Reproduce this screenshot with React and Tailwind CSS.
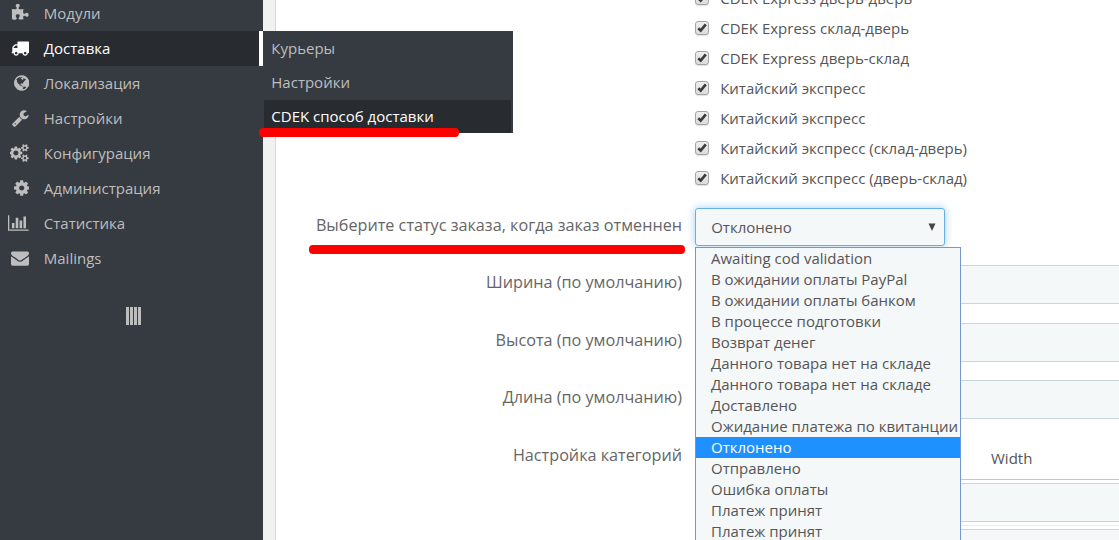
const ICONS = {
  puzzle: {
    box: "0 0 1792 1792",
    width: 18,
    d: "M1755 1083q0 81-44.500 135t-123.500 54q-41 0-77.500-17.500t-59-38-56.500-38-71-17.500q-110 0-110 124 0 39 16 115t15 115v5q-22 0-33 1-34 3-97.500 11.500t-115.500 13.500-98 5q-61 0-103-26.500t-42-83.500q0-37 17.500-71t38-56.500 38-59 17.500-77.500q0-79-54-123.500t-135-44.500q-84 0-143 45.500t-59 127.500q0 43 15 83t33.500 64.500 33.500 53 15 50.500q0 45-46 89-37 35-117 35-95 0-245-24-9-2-27.500-4t-27.500-4l-13-2q-1 0-3-1-2 0-2-1v-1024q2 1 17.500 3.500t34 5 21.500 3.500q150 24 245 24 80 0 117-35 46-44 46-89 0-22-15-50.500t-33.500-53-33.500-64.500-15-83q0-82 59-127.500t144-45.500q80 0 134 44.500t54 123.500q0 41-17.500 77.500t-38 59-38 56.500-17.500 71q0 57 42 83.500t103 26.500q64 0 180-15t163-17v2q-1 2-3.500 17.500t-5 34-3.500 21.500q-24 150-24 245 0 80 35 117 44 46 89 46 22 0 50.500-15t53-33.500 64.500-33.500 83-15q82 0 127.500 59t45.500 143z",
  },
  truck: {
    box: "64 0 1792 1792",
    width: 18,
    d: "M704 1408q0-52-38-90t-90-38-90 38-38 90 38 90 90 38 90-38 38-90zm-384-512h384v-256h-158q-13 0-22 9l-195 195q-9 9-9 22v30zm1280 512q0-52-38-90t-90-38-90 38-38 90 38 90 90 38 90-38 38-90zm256-1088v1024q0 15-4 26.500t-13.500 18.500-16.500 11.500-23.500 6-22.500 2-25.500 0-22.500-.5q0 106-75 181t-181 75-181-75-75-181h-384q0 106-75 181t-181 75-181-75-75-181h-64q-3 0-22.500.5t-25.500 0-22.500-2-23.500-6-16.500-11.500-13.500-18.500-4-26.500q0-26 19-45t45-19v-320q0-8-.5-35t0-38 2.500-34.500 6.500-37 14-30.500 22.500-30l198-198q19-19 50.500-32t58.500-13h160v-192q0-26 19-45t45-19h1024q26 0 45 19t19 45z",
  },
  globe: {
    box: "128 0 1536 1792",
    width: 15.4,
    d: "M896 128q209 0 385.500 103t279.500 279.500 103 385.500-103 385.500-279.500 279.500-385.500 103-385.500-103-279.500-279.500-103-385.500 103-385.500 279.500-279.500 385.500-103zm274 521q-2 1-9.500 9.500t-13.500 9.500q2 0 4.500-5t5-11 3.500-7q6-7 22-15 14-6 52-12 34-8 51 11-2-2 9.500-13t14.500-12q3-2 15-4.500t15-7.500l2-22q-12 1-17.500-7t-6.500-21q0 2-6 8 0-7-4.500-8t-11.500 1-9 1q-10-3-15-7.500t-8-16.500-4-15q-2-5-9.500-10.500t-9.500-10.500q-1-2-2.500-5.500t-3-6.500-4-5.500-5.500-2.500-7 5-7.500 10-4.500 5q-3-2-6-1.500t-4.500 1-4.500 3-5 3.500q-3 2-8.500 3t-8.500 2q15-5-1-11-10-4-16-3 9-4 7.500-12t-8.500-14h5q-1-4-8.500-8.500t-17.500-8.500-13-6q-8-5-34-9.500t-33-.5q-5 6-4.500 10.500t4 14 3.500 12.500q1 6-5.500 13t-6.500 12q0 7 14 15.500t10 21.500q-3 8-16 16t-16 12q-5 8-1.500 18.500t10.500 16.500q2 2 1.500 4t-3.500 4.500-5.500 4-6.500 3.500l-3 2q-11 5-20.500-6t-13.500-26q-7-25-16-30-23-8-29 1-5-13-41-26-25-9-58-4 6-1 0-15-7-15-19-12 3-6 4-17.500t1-13.500q3-13 12-23 1-1 7-8.500t9.500-13.500.5-6q35 4 50-11 5-5 11.500-17t10.500-17q9-6 14-5.500t14.500 5.500 14.500 5q14 1 15.500-11t-7.500-20q12 1 3-17-4-7-8-9-12-4-27 5-8 4 2 8-1-1-9.500 10.500t-16.500 17.500-16-5q-1-1-5.500-13.500t-9.500-13.500q-8 0-16 15 3-8-11-15t-24-8q19-12-8-27-7-4-20.500-5t-19.500 4q-5 7-5.500 11.500t5 8 10.500 5.500 11.500 4 8.500 3q14 10 8 14-2 1-8.500 3.500t-11.500 4.500-6 4q-3 4 0 14t-2 14q-5-5-9-17.500t-7-16.500q7 9-25 6l-10-1q-4 0-16 2t-20.500 1-13.500-8q-4-8 0-20 1-4 4-2-4-3-11-9.500t-10-8.500q-46 15-94 41 6 1 12-1 5-2 13-6.500t10-5.500q34-14 42-7l5-5q14 16 20 25-7-4-30-1-20 6-22 12 7 12 5 18-4-3-11.500-10t-14.500-11-15-5q-16 0-22 1-146 80-235 222 7 7 12 8 4 1 5 9t2.500 11 11.500-3q9 8 3 19 1-1 44 27 19 17 21 21 3 11-10 18-1-2-9-9t-9-4q-3 5 .5 18.500t10.500 12.500q-7 0-9.500 16t-2.500 35.500-1 23.500l2 1q-3 12 5.500 34.500t21.500 19.500q-13 3 20 43 6 8 8 9 3 2 12 7.500t15 10 10 10.500q4 5 10 22.500t14 23.500q-2 6 9.500 20t10.500 23q-1 0-2.500 1t-2.500 1q3 7 15.500 14t15.500 13q1 3 2 10t3 11 8 2q2-20-24-62-15-25-17-29-3-5-5.500-15.500t-4.500-14.500q2 0 6 1.500t8.500 3.500 7.500 4 2 3q-3 7 2 17.500t12 18.500 17 19 12 13q6 6 14 19.500t0 13.500q9 0 20 10.500t17 19.500q5 8 8 26t5 24q2 7 8.500 13.500t12.500 9.500l16 8 13 7q5 2 18.500 10.500t21.500 11.500q10 4 16 4t14.500-2.500 13.500-3.500q15-2 29 15t21 21q36 19 55 11-2 1 .5 7.500t8 15.500 9 14.500 5.500 8.500q5 6 18 15t18 15q6-4 7-9-3 8 7 20t18 10q14-3 14-32-31 15-49-18 0-1-2.500-5.500t-4-8.500-2.500-8.500 0-7.500 5-3q9 0 10-3.500t-2-12.500-4-13q-1-8-11-20t-12-15q-5 9-16 8t-16-9q0 1-1.500 5.500t-1.500 6.500q-13 0-15-1 1-3 2.500-17.500t3.500-22.500q1-4 5.500-12t7.500-14.500 4-12.500-4.500-9.500-17.500-2.500q-19 1-26 20-1 3-3 10.500t-5 11.500-9 7q-7 3-24 2t-24-5q-13-8-22.500-29t-9.500-37q0-10 2.500-26.500t3-25-5.500-24.500q3-2 9-9.500t10-10.500q2-1 4.500-1.500t4.500 0 4-1.500 3-6q-1-1-4-3-3-3-4-3 7 3 28.500-1.500t27.500 1.500q15 11 22-2 0-1-2.500-9.500t-.5-13.500q5 27 29 9 3 3 15.500 5t17.500 5q3 2 7 5.500t5.500 4.500 5-.5 8.500-6.500q10 14 12 24 11 40 19 44 7 3 11 2t4.500-9.500 0-14-1.500-12.500l-1-8v-18l-1-8q-15-3-18.500-12t1.500-18.500 15-18.500q1-1 8-3.500t15.500-6.500 12.500-8q21-19 15-35 7 0 11-9-1 0-5-3t-7.500-5-4.500-2q9-5 2-16 5-3 7.500-11t7.500-10q9 12 21 2 8-8 1-16 5-7 20.500-10.500t18.500-9.500q7 2 8-2t1-12 3-12q4-5 15-9t13-5l17-11q3-4 0-4 18 2 31-11 10-11-6-20 3-6-3-9.500t-15-5.500q3-1 11.500-.5t10.500-1.500q15-10-7-16-17-5-43 12zm-163 877q206-36 351-189-3-3-12.500-4.500t-12.500-3.500q-18-7-24-8 1-7-2.500-13t-8-9-12.500-8-11-7q-2-2-7-6t-7-5.500-7.500-4.500-8.500-2-10 1l-3 1q-3 1-5.500 2.500t-5.500 3-4 3 0 2.500q-21-17-36-22-5-1-11-5.500t-10.500-7-10-1.500-11.500 7q-5 5-6 15t-2 13q-7-5 0-17.500t2-18.500q-3-6-10.500-4.500t-12 4.500-11.500 8.500-9 6.500-8.500 5.500-8.500 7.500q-3 4-6 12t-5 11q-2-4-11.500-6.500t-9.500-5.500q2 10 4 35t5 38q7 31-12 48-27 25-29 40-4 22 12 26 0 7-8 20.500t-7 21.500q0 6 2 16z",
  },
  wrench: {
    box: "64 0 1664 1792",
    width: 16.7,
    d: "M448 1472q0-26-19-45t-45-19-45 19-19 45 19 45 45 19 45-19 19-45zm644-420l-682 682q-37 37-90 37-52 0-91-37l-106-108q-38-36-38-90 0-53 38-91l681-681q39 98 114.500 173.500t173.500 114.500zm634-435q0 39-23 106-47 134-164.500 217.500t-258.500 83.500q-185 0-316.500-131.500t-131.500-316.500 131.500-316.500 316.500-131.500q58 0 121.500 16.500t107.500 46.500q16 11 16 28t-16 28l-293 169v224l193 107q5-3 79-48.500t135.500-81 70.500-35.500q15 0 23.500 10t8.500 25z",
  },
  cogs: {
    box: "0 0 1920 1792",
    width: 19.5,
    d: "M832 896q0-106-75-181t-181-75-181 75-75 181 75 181 181 75 181-75 75-181zm768 512q0-52-38-90t-90-38-90 38-38 90q0 53 37.500 90.500t90.500 37.500 90.500-37.500 37.500-90.500zm0-1024q0-52-38-90t-90-38-90 38-38 90q0 53 37.500 90.500t90.500 37.500 90.500-37.500 37.500-90.500zm-384 421v185q0 10-7 19.500t-16 10.500l-155 24q-11 35-32 76 34 48 90 115 7 11 7 20 0 12-7 19-23 30-82.500 89.500t-78.500 59.500q-11 0-21-7l-115-90q-37 19-77 31-11 108-23 155-7 24-30 24h-186q-11 0-20-7.500t-10-17.500l-23-153q-34-10-75-31l-118 89q-7 7-20 7-11 0-21-8-144-133-144-160 0-9 7-19 10-14 41-53t47-61q-23-44-35-82l-152-24q-10-1-17-9.500t-7-19.500v-185q0-10 7-19.500t16-10.500l155-24q11-35 32-76-34-48-90-115-7-11-7-20 0-12 7-20 22-30 82-89t79-59q11 0 21 7l115 90q34-18 77-32 11-108 23-154 7-24 30-24h186q11 0 20 7.500t10 17.500l23 153q34 10 75 31l118-89q8-7 20-7 11 0 21 8 144 133 144 160 0 8-7 19-12 16-42 54t-45 60q23 48 34 82l152 23q10 2 17 10.500t7 19.500zm640 533v140q0 16-149 31-12 27-30 52 51 113 51 138 0 4-4 7-122 71-124 71-8 0-46-47t-52-68q-20 2-30 2t-30-2q-14 21-52 68t-46 47q-2 0-124-71-4-3-4-7 0-25 51-138-18-25-30-52-149-15-149-31v-140q0-16 149-31 13-29 30-52-51-113-51-138 0-4 4-7 4-2 35-20t59-34 30-16q8 0 46 46.500t52 67.500q20-2 30-2t30 2q51-71 92-112l6-2q4 0 124 70 4 3 4 7 0 25-51 138 17 23 30 52 149 15 149 31zm0-1024v140q0 16-149 31-12 27-30 52 51 113 51 138 0 4-4 7-122 71-124 71-8 0-46-47t-52-68q-20 2-30 2t-30-2q-14 21-52 68t-46 47q-2 0-124-71-4-3-4-7 0-25 51-138-18-25-30-52-149-15-149-31v-140q0-16 149-31 13-29 30-52-51-113-51-138 0-4 4-7 4-2 35-20t59-34 30-16q8 0 46 46.500t52 67.500q20-2 30-2t30 2q51-71 92-112l6-2q4 0 124 70 4 3 4 7 0 25-51 138 17 23 30 52 149 15 149 31z",
  },
  cog: {
    box: "128 0 1536 1792",
    width: 15.4,
    d: "M1152 896q0-106-75-181t-181-75-181 75-75 181 75 181 181 75 181-75 75-181zm512-109v222q0 12-8 23t-20 13l-185 28q-19 54-39 91 35 50 107 138 10 12 10 25t-9 23q-27 37-99 108t-94 71q-12 0-26-9l-138-108q-44 23-91 38-16 136-29 186-7 28-36 28h-222q-14 0-24.500-8.500t-11.500-21.500l-28-184q-49-16-90-37l-141 107q-10 9-25 9-14 0-25-11-126-114-165-168-7-10-7-23 0-12 8-23 15-21 51-66.500t54-70.500q-27-50-41-99l-183-27q-13-2-21-12.500t-8-23.500v-222q0-12 8-23t19-13l186-28q14-46 39-92-40-57-107-138-10-12-10-24 0-10 9-23 26-36 98.500-107.500t94.500-71.500q13 0 26 10l138 107q44-23 91-38 16-136 29-186 7-28 36-28h222q14 0 24.500 8.500t11.500 21.500l28 184q49 16 90 37l142-107q9-9 24-9 13 0 25 10 129 119 165 170 7 8 7 22 0 12-8 23-15 21-51 66.500t-54 70.500q26 50 41 98l183 28q13 2 21 12.500t8 23.500z",
  },
  chart: {
    box: "0 0 2048 1792",
    width: 20.6,
    d: "M640 896v512h-256v-512h256zm384-512v1024h-256v-1024h256zm1024 1152v128h-2048v-1536h128v1408h1920zm-640-896v768h-256v-768h256zm384-384v1152h-256v-1152h256z",
  },
  envelope: {
    box: "0 0 1792 1792",
    width: 18,
    d: "M1792 710v794q0 66-47 113t-113 47h-1472q-66 0-113-47t-47-113v-794q44 49 101 87 362 246 497 345 57 42 92.500 65.500t94.500 48 110 24.500h2q51 0 110-24.500t94.500-48 92.500-65.500q170-123 498-345 57-39 100-87zm0-294q0 79-49 151t-122 123q-376 261-468 325-10 7-42.500 30.500t-54 38-52 32.500-57.500 27-50 9h-2q-23 0-50-9t-57.500-27-52-32.500-54-38-42.500-30.500q-91-64-262-182.500t-205-142.500q-62-42-117-115.500t-55-136.500q0-78 41.500-130t118.500-52h1472q65 0 112.500 47t47.500 113z",
  },
};

const MENU = [
  ["puzzle", "Модули"],
  ["truck", "Доставка"],
  ["globe", "Локализация"],
  ["wrench", "Настройки"],
  ["cogs", "Конфигурация"],
  ["cog", "Администрация"],
  ["chart", "Статистика"],
  ["envelope", "Mailings"],
];

const CARRIERS = [
  "CDEK Express дверь-дверь",
  "CDEK Express склад-дверь",
  "CDEK Express дверь-склад",
  "Китайский экспресс",
  "Китайский экспресс",
  "Китайский экспресс (склад-дверь)",
  "Китайский экспресс (дверь-склад)",
];

const STATUSES = [
  "Awaiting cod validation",
  "В ожидании оплаты PayPal",
  "В ожидании оплаты банком",
  "В процессе подготовки",
  "Возврат денег",
  "Данного товара нет на складе",
  "Данного товара нет на складе",
  "Доставлено",
  "Ожидание платежа по квитанции",
  "Отклонено",
  "Отправлено",
  "Ошибка оплаты",
  "Платеж принят",
  "Платеж принят",
];

function Icon({ name }) {
  const icon = ICONS[name];
  return (
    <svg viewBox={icon.box} width={icon.width} height="18" fill="currentColor" className="shrink-0">
      <path d={icon.d} />
    </svg>
  );
}

function Submenu() {
  return (
    <div className="absolute left-[263px] top-0 z-20 flex h-[102px] w-[250px] flex-col bg-[#363a41] pl-px pr-0.5 text-[#bebebe]">
      <div className="flex h-[35px] items-center pb-px pl-[7.300px]">Курьеры</div>
      <div className="flex h-[34px] items-center pb-0.5 pl-[7.300px]">Настройки</div>
      <div className="flex h-[33px] items-center bg-[#282b30] pb-px pl-[7.300px] text-white">CDEK способ доставки</div>
    </div>
  );
}

function Sidebar() {
  return (
    <nav className="-mt-1 flex h-[544px] w-[263px] shrink-0 flex-col bg-[#363a41] text-[15px] text-[#bebebe]">
      {MENU.map(([icon, label]) => {
        const active = icon === "truck";
        return (
          <div
            key={label}
            className={
              active
                ? "relative flex h-[35px] items-center border-r-4 border-white bg-[#282b30] pb-px text-white"
                : "flex h-[35px] items-center pb-px"
            }
          >
            <span className="flex w-[29px] justify-end">
              <Icon name={icon} />
            </span>
            <span className="pl-[14.800px]">{label}</span>
            {active && <Submenu />}
          </div>
        );
      })}
      <div className="mt-[31px] flex justify-center pl-[3px]">
        <svg width="15" height="18" viewBox="0 0 15 18" fill="currentColor">
          <path d="M0 0h3v18H0zM4 0h3v18H4zM8 0h3v18H8zM12 0H15v18h-3z" />
        </svg>
      </div>
    </nav>
  );
}

function Checkbox() {
  return (
    <span className="-mt-px flex size-[14px] shrink-0 items-center justify-center rounded-[3px] border border-[#a4a4a4] bg-linear-to-b from-[#eeeeee] to-[#dcdcdc] shadow-[0_1px_1px_rgba(0,0,0,0.12)]">
      <svg width="12" height="12" viewBox="0 0 12 12">
        <path d="M2.300 6.300L4.700 8.600L9.800 2.400" fill="none" stroke="#3c3c3c" strokeWidth="2.700" />
      </svg>
    </span>
  );
}

function Field({ label, last }) {
  return (
    <div className={last ? "flex h-[39px]" : "mb-[18.500px] flex h-[39px]"}>
      <div className="flex h-[34px] w-[406px] items-center justify-end text-[16.200px] text-[#666]">{label}</div>
      <div className="ml-[13px] flex-1 border-y border-[#c7d6db] bg-[#f5f8f9]" />
    </div>
  );
}

function StatusList() {
  return (
    <div className="absolute left-0 top-[39px] z-10 w-[266px] border border-[#7397d2] bg-[#f5f8f9]">
      {STATUSES.map((status, i) => (
        <div
          key={i}
          className={
            i === 9
              ? "flex h-[21px] items-center whitespace-nowrap bg-[#1e90ff] pb-px pl-[15px] text-white"
              : "flex h-[21px] items-center whitespace-nowrap pb-px pl-[15px]"
          }
        >
          {status}
        </div>
      ))}
    </div>
  );
}

export default function App() {
  return (
    <div className="relative flex h-[540px] w-[1119px] overflow-hidden bg-[#eff1f2] font-['Open_Sans','Noto_Sans',sans-serif] text-[15px] leading-5 text-[#555]">
      <Sidebar />
      <main className="ml-3 flex h-[540px] flex-1 flex-col border-l border-[#d3d8db] bg-white">
        <div className="-mt-[17px] ml-[419px] flex flex-col">
          {CARRIERS.map((name, i) => (
            <label key={i} className="flex h-[30px] items-center">
              <Checkbox />
              <span className="pl-[11.200px]">{name}</span>
            </label>
          ))}
        </div>

        <div className="mt-[15px] flex h-[38px]">
          <div className="flex h-[34px] w-[406px] items-center justify-end text-[16.200px] text-[#666]">
            Выберите статус заказа, когда заказ отменнен
          </div>
          <div className="relative ml-[13px] w-[250px]">
            <div className="flex h-[38px] items-center justify-between rounded-[3px] border border-[#66afe9] bg-[#f5f8f9] pl-[15.200px] pr-2 shadow-[0_0_8px_rgba(102,175,233,0.6)]">
              <span>Отклонено</span>
              <svg width="8" height="8" viewBox="0 0 8 8" fill="#444">
                <path d="M0.500 0.500h7L4 8z" />
              </svg>
            </div>
            <StatusList />
          </div>
        </div>

        <div className="mt-[19px] flex flex-col">
          <Field label="Ширина (по умолчанию)" />
          <Field label="Высота (по умолчанию)" />
          <Field label="Длина (по умолчанию)" last />
        </div>

        <div className="mt-[18px] flex">
          <div className="flex h-[36px] w-[406px] items-center justify-end text-[16.200px] text-[#666]">
            Настройка категорий
          </div>
          <div className="ml-[13px] flex flex-1 flex-col">
            <div className="flex h-[43px] items-center border-b border-[#a0d0eb] pl-[296px]">Width</div>
            <div className="mt-[3px] h-[39px] border-y border-[#c7d6db] bg-[#f5f8f9]" />
            <div className="mt-[3px] h-px bg-[#eaedef]" />
            <div className="mt-[3px] h-[39px] border-y border-[#c7d6db] bg-[#f5f8f9]" />
          </div>
        </div>
      </main>

      <div className="absolute left-[259px] top-[128px] z-30 h-[9px] w-[200px] rounded-[4px] bg-[#ff0000]" />
      <div className="absolute left-[309px] top-[245px] z-30 h-[9px] w-[376px] rounded-[4px] bg-[#ff0000]" />
    </div>
  );
}
